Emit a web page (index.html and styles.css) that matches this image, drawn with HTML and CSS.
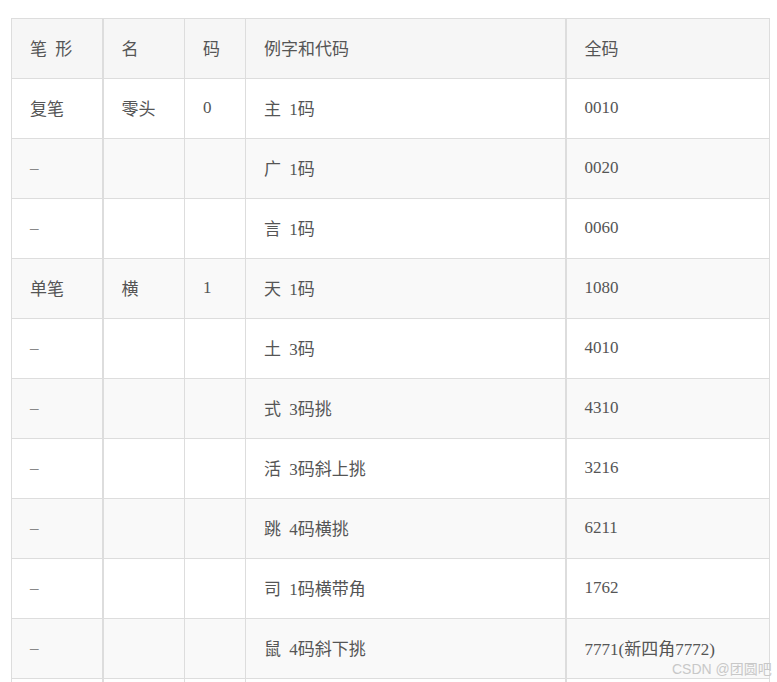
FILE: index.html
```html
<!DOCTYPE html>
<html lang="zh">
<head>
<meta charset="utf-8">
<link rel="stylesheet" href="styles.css">
</head>
<body>
<div class="wrap">
<table class="tbl">
  <colgroup>
    <col class="c1"><col class="c2"><col class="c3"><col class="c4"><col class="c5">
  </colgroup>
  <thead>
    <tr><th class="b2">笔 形</th><th>名</th><th>码</th><th class="b2">例字和代码</th><th>全码</th></tr>
  </thead>
  <tbody>
    <tr><td class="b2">复笔</td><td>零头</td><td>0</td><td class="b2">主 1码</td><td>0010</td></tr>
    <tr><td class="b2 dash">–</td><td></td><td></td><td class="b2">广 1码</td><td>0020</td></tr>
    <tr><td class="b2 dash">–</td><td></td><td></td><td class="b2">言 1码</td><td>0060</td></tr>
    <tr><td class="b2">单笔</td><td>横</td><td>1</td><td class="b2">天 1码</td><td>1080</td></tr>
    <tr><td class="b2 dash">–</td><td></td><td></td><td class="b2">土 3码</td><td>4010</td></tr>
    <tr><td class="b2 dash">–</td><td></td><td></td><td class="b2">式 3码挑</td><td>4310</td></tr>
    <tr><td class="b2 dash">–</td><td></td><td></td><td class="b2">活 3码斜上挑</td><td>3216</td></tr>
    <tr><td class="b2 dash">–</td><td></td><td></td><td class="b2">跳 4码横挑</td><td>6211</td></tr>
    <tr><td class="b2 dash">–</td><td></td><td></td><td class="b2">司 1码横带角</td><td>1762</td></tr>
    <tr><td class="b2 dash">–</td><td></td><td></td><td class="b2">鼠 4码斜下挑</td><td>7771(新四角7772)</td></tr>
    <tr><td class="b2"></td><td></td><td></td><td class="b2"></td><td></td></tr>
  </tbody>
</table>
<div class="mark">CSDN @团圆吧</div>
</div>
</body>
</html>
```

FILE: styles.css
```css
html, body {
  margin: 0;
  padding: 0;
  background: #fff;
}
body {
  overflow: hidden;
  height: 682px;
}
.wrap {
  position: relative;
  padding: 18px 0 0 11px;
}
.tbl {
  border-collapse: collapse;
  table-layout: fixed;
  width: 758px;
  font-family: "Liberation Serif", "Noto Sans CJK SC", serif;
  font-size: 17px;
  color: #555555;
  word-spacing: 4px;
}
.c1 { width: 91px; }
.c2 { width: 82px; }
.c3 { width: 61px; }
.c4 { width: 320px; }
.c5 { width: 204px; }
.tbl th, .tbl td {
  height: 60px;
  padding: 0 0 2px 18px;
  border: 1px solid #dddddd;
  text-align: left;
  font-weight: normal;
  vertical-align: middle;
  box-sizing: border-box;
}
.tbl th.b2, .tbl td.b2 {
  border-right: 2px solid #dddddd;
}
.tbl td.dash {
  color: #888888;
}
.tbl thead th {
  background: #f6f6f6;
}
.tbl tbody tr:nth-child(even) td {
  background: #f9f9f9;
}
.mark {
  position: absolute;
  left: 672px;
  top: 658px;
  font-family: "Liberation Sans", "Noto Sans CJK SC", sans-serif;
  font-size: 14px;
  color: #c8c8c8;
  white-space: nowrap;
}
```
